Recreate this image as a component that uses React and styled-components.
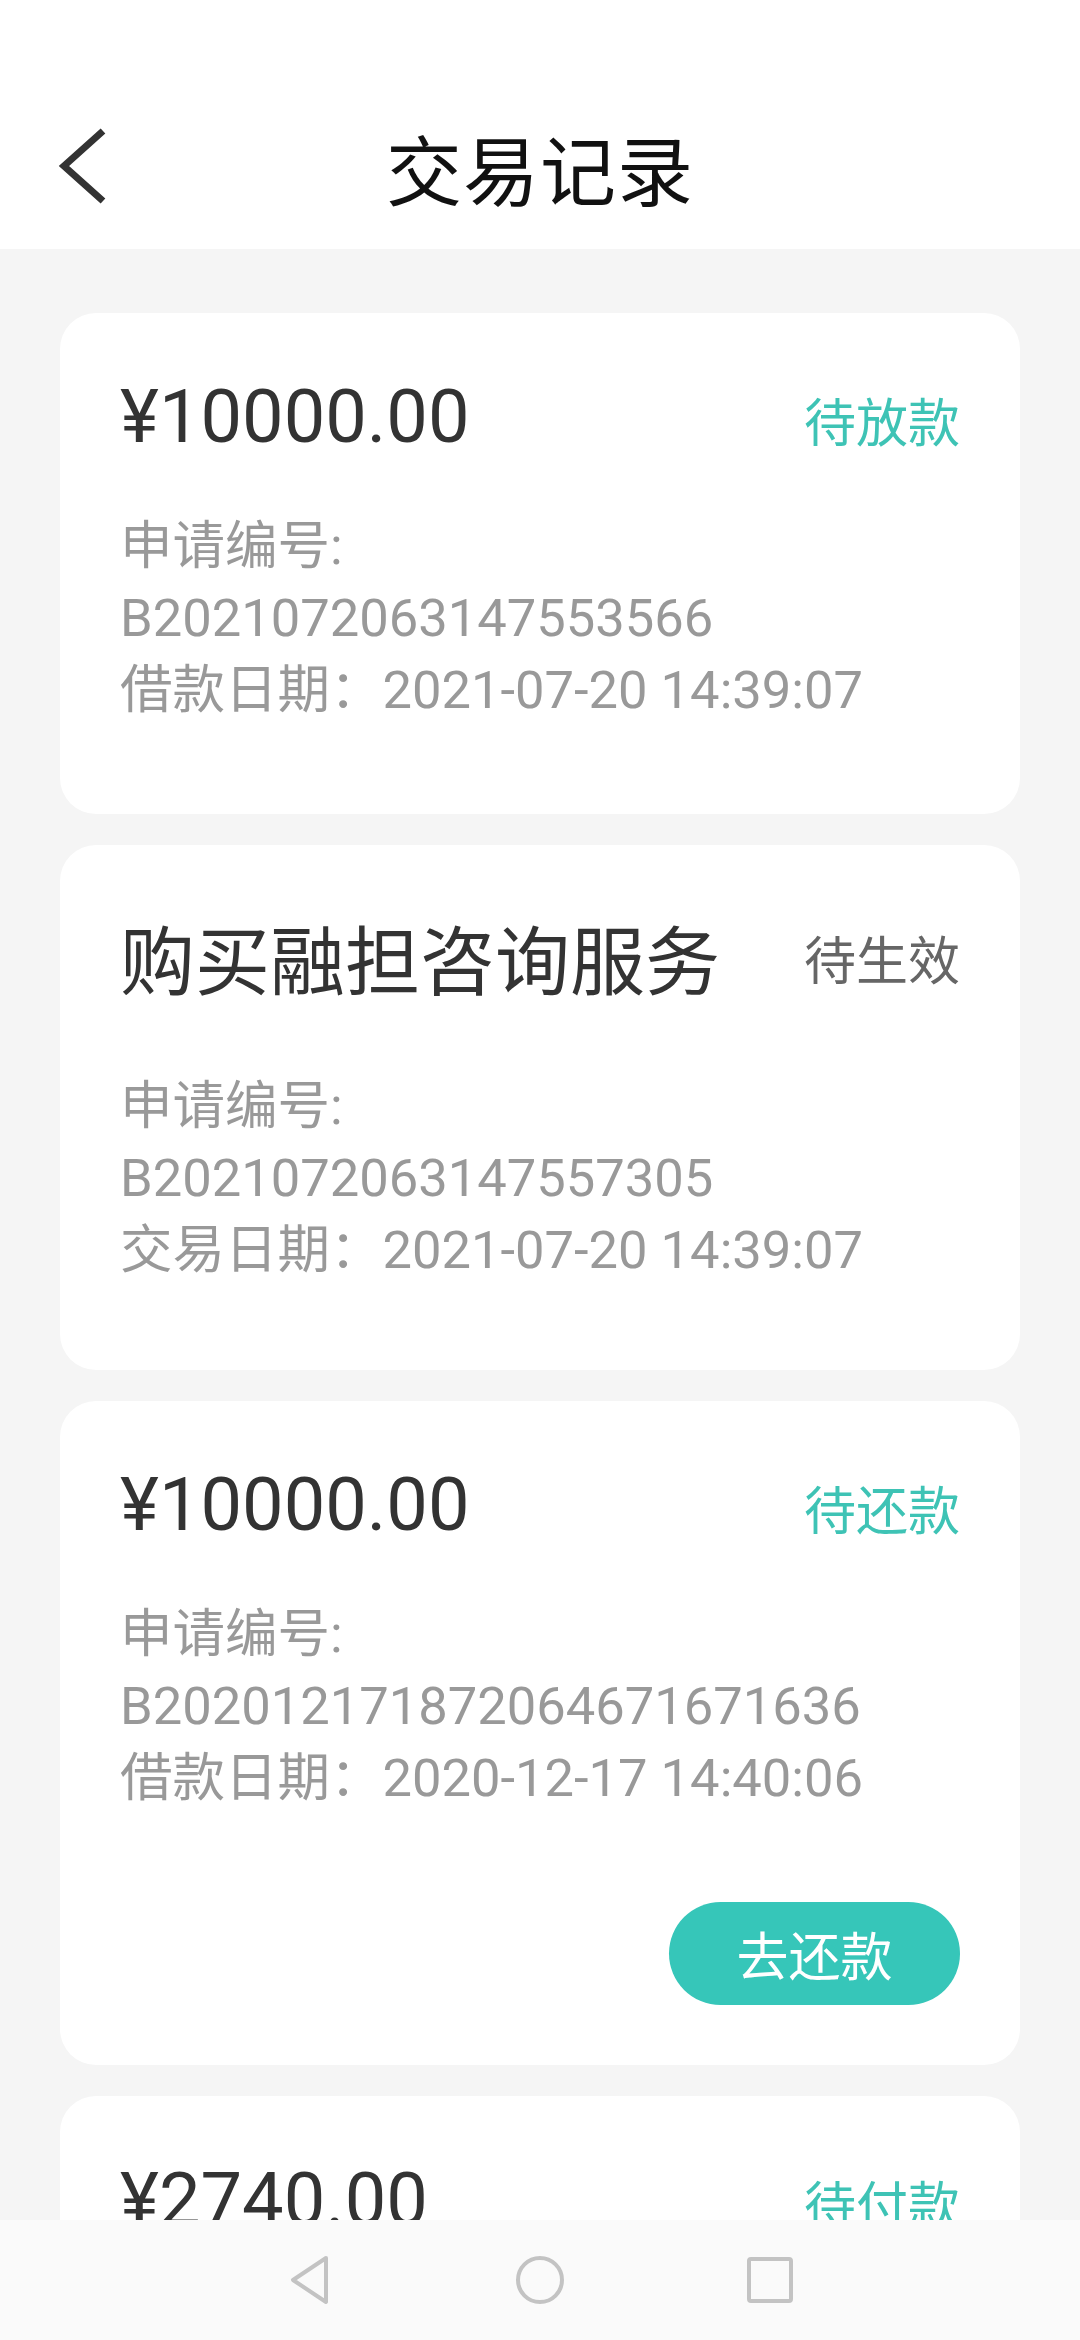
import React from 'react';
import styled, { createGlobalStyle } from 'styled-components';

const GlobalStyle = createGlobalStyle`
  html, body {
    margin: 0;
    padding: 0;
    background: #f5f5f5;
  }
  * {
    box-sizing: border-box;
  }
`;

const Screen = styled.div`
  width: 1080px;
  height: 2340px;
  display: flex;
  flex-direction: column;
  overflow: hidden;
  background: #f5f5f5;
  font-family: Roboto, "Noto Sans CJK SC", sans-serif;
`;

const Header = styled.header`
  flex: none;
  background: #fff;
  padding-top: 84px;
`;

const NavBar = styled.div`
  height: 165px;
  display: grid;
  grid-template-columns: 1fr auto 1fr;
  align-items: center;
  padding: 0 52px;
`;

const BackButton = styled.button`
  justify-self: start;
  width: 60px;
  height: 90px;
  padding: 0;
  border: none;
  background: none;
  display: flex;
`;

const Title = styled.h1`
  margin: 0;
  font-family: "Noto Sans CJK SC", sans-serif;
  font-size: 76px;
  font-weight: 400;
  line-height: 1;
  color: #111;
  letter-spacing: 1px;
`;

const List = styled.main`
  flex: 1;
  min-height: 0;
  overflow: hidden;
  display: flex;
  flex-direction: column;
  gap: 31px;
  padding: 64px 60px 0;
`;

const Card = styled.section`
  flex: none;
  background: #fff;
  border-radius: 36px;
  padding: 54px 60px 0;
`;

const Head = styled.div`
  display: flex;
  justify-content: space-between;
  align-items: ${p => (p.$tall ? 'center' : 'baseline')};
  height: ${p => (p.$tall ? 128 : 100)}px;
  line-height: ${p => (p.$tall ? 128 : 100)}px;
`;

const Amount = styled.div`
  font-size: ${p => (p.$text ? 75 : 74)}px;
  color: #333;
`;

const Status = styled.div`
  font-size: 52px;
  color: ${p => (p.$muted ? '#666' : '#3ec3b5')};
`;

const Details = styled.div`
  margin-top: 43px;
  padding-bottom: ${p => (p.$tall ? 84 : 88)}px;
  font-size: 52.5px;
  line-height: 72px;
  color: #999;
`;

const Line = styled.div`
  white-space: nowrap;
`;

const Footer = styled.div`
  display: flex;
  justify-content: flex-end;
  padding-bottom: 60px;
`;

const PayButton = styled.button`
  width: 291px;
  height: 103px;
  border: none;
  border-radius: 52px;
  background: #36c6b9;
  color: #fff;
  font-family: "Noto Sans CJK SC", sans-serif;
  font-size: 52px;
  padding: 0;
`;

const SystemBar = styled.nav`
  flex: none;
  height: 120px;
  background: #fafafa;
  display: flex;
  justify-content: center;
  align-items: center;
  gap: 170px;
`;

const SysKey = styled.div`
  width: 60px;
  height: 60px;
  display: flex;
  align-items: center;
  justify-content: center;
`;

const records = [
  {
    title: '¥10000.00',
    status: '待放款',
    no: 'B2021072063147553566',
    dateLabel: '借款日期',
    date: '2021-07-20 14:39:07',
  },
  {
    title: '购买融担咨询服务',
    text: true,
    status: '待生效',
    muted: true,
    no: 'B2021072063147557305',
    dateLabel: '交易日期',
    date: '2021-07-20 14:39:07',
  },
  {
    title: '¥10000.00',
    status: '待还款',
    no: 'B202012171872064671671636',
    dateLabel: '借款日期',
    date: '2020-12-17 14:40:06',
    action: '去还款',
  },
  {
    title: '¥2740.00',
    status: '待付款',
    no: 'B202012171872064671671636',
    dateLabel: '借款日期',
    date: '2020-12-17 14:40:06',
  },
];

const Chevron = () => (
  <svg width="60" height="90" viewBox="0 0 60 90">
    <path d="M51 9 L12 44 L51 79" fill="none" stroke="#333" strokeWidth="7" />
  </svg>
);

const Record = ({ item }) => (
  <Card>
    <Head $tall={item.text}>
      <Amount $text={item.text}>{item.title}</Amount>
      <Status $muted={item.muted}>{item.status}</Status>
    </Head>
    <Details $tall={item.text}>
      <Line>申请编号:</Line>
      <Line>{item.no}</Line>
      <Line>{item.dateLabel}：{item.date}</Line>
    </Details>
    {item.action && (
      <Footer>
        <PayButton>{item.action}</PayButton>
      </Footer>
    )}
  </Card>
);

const App = () => (
  <Screen>
    <GlobalStyle />
    <Header>
      <NavBar>
        <BackButton aria-label="返回">
          <Chevron />
        </BackButton>
        <Title>交易记录</Title>
        <div />
      </NavBar>
    </Header>
    <List>
      {records.map((item, i) => (
        <Record key={i} item={item} />
      ))}
    </List>
    <SystemBar>
      <SysKey>
        <svg width="44" height="52" viewBox="0 0 44 52">
          <path d="M38 4 L5 26 L38 48 Z" fill="none" stroke="#c3c3c3" strokeWidth="4" strokeLinejoin="round" />
        </svg>
      </SysKey>
      <SysKey>
        <svg width="52" height="52" viewBox="0 0 52 52">
          <circle cx="26" cy="26" r="22" fill="none" stroke="#c3c3c3" strokeWidth="4" />
        </svg>
      </SysKey>
      <SysKey>
        <svg width="48" height="48" viewBox="0 0 48 48">
          <rect x="3" y="3" width="42" height="42" rx="2" fill="none" stroke="#c3c3c3" strokeWidth="4" />
        </svg>
      </SysKey>
    </SystemBar>
  </Screen>
);

export default App;
